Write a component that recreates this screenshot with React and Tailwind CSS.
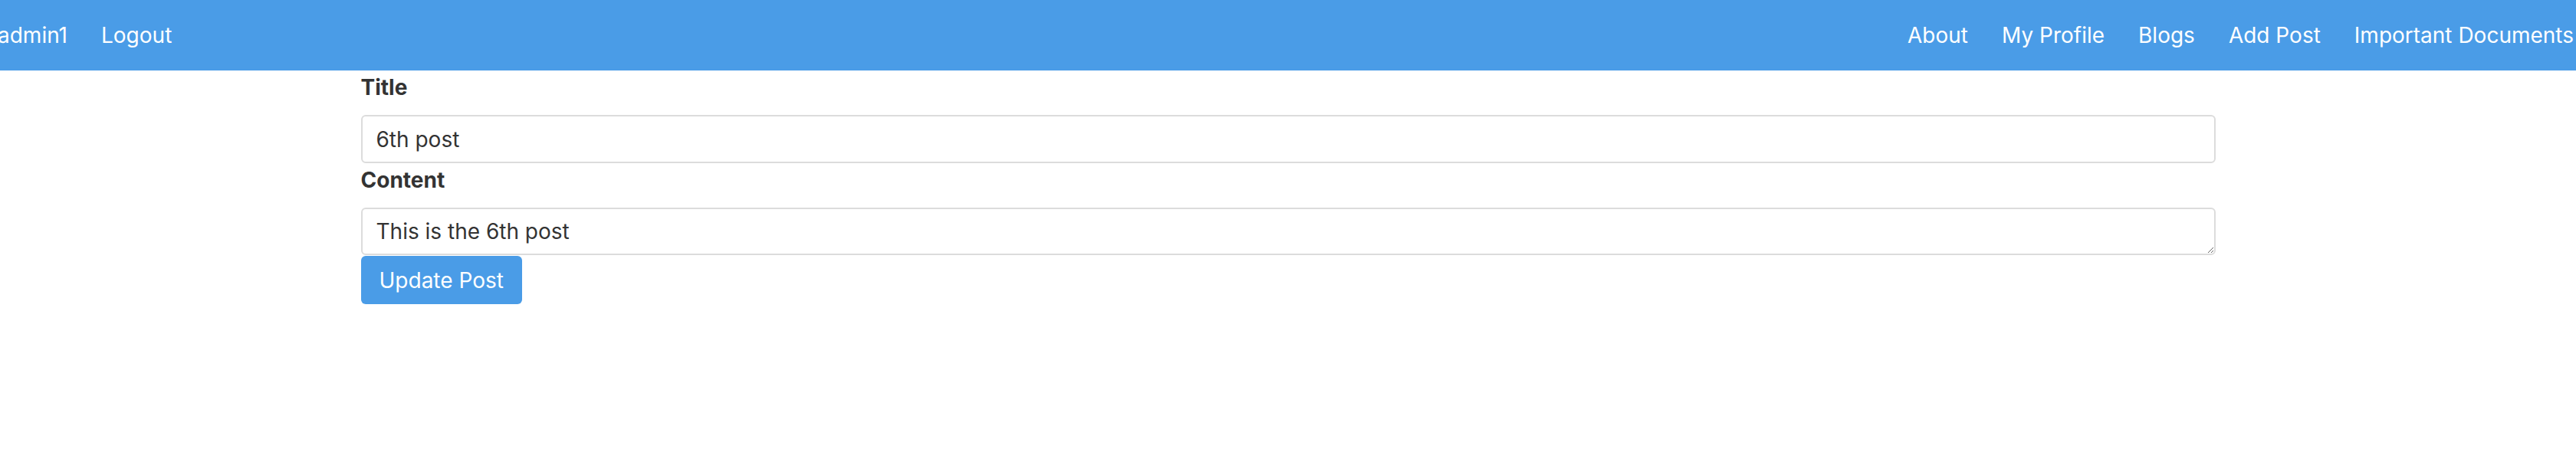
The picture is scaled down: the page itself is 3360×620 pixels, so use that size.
import React, { useState } from 'react';

const leftLinks = ['admin1', 'Logout'];
const rightLinks = ['About', 'My Profile', 'Blogs', 'Add Post', 'Important Documents'];

const NavLink = ({ label }) => (
    <li>
        <a href="#" className="block px-[22px] text-white">
            {label}
        </a>
    </li>
);

const App = () => {
    const [title, setTitle] = useState('6th post');
    const [content, setContent] = useState('This is the 6th post');

    return (
        <div className="min-h-screen bg-white font-['Inter','Liberation_Sans',sans-serif] text-[#333333]">
            {/* navbar */}
            <nav className="flex h-[92px] items-center justify-between overflow-hidden bg-[#4a9ce7] text-[28px] leading-[44px]">
                <ul className="ml-[-25px] flex">
                    {leftLinks.map((l) => (
                        <NavLink key={l} label={l} />
                    ))}
                </ul>
                <ul className="mr-[-19px] flex">
                    {rightLinks.map((l) => (
                        <NavLink key={l} label={l} />
                    ))}
                </ul>
            </nav>

            {/* edit form */}
            <form className="mx-auto flex w-[2419px] flex-col" onSubmit={(e) => e.preventDefault()}>
                <label className="mb-[14px] block text-[28px] font-bold leading-[44px]">Title</label>
                <input
                    type="text"
                    value={title}
                    onChange={(e) => setTitle(e.target.value)}
                    className="h-[63px] rounded-[6px] border-2 border-[#dcdcdc] px-[18px] text-[28px] text-[#333333] outline-none"
                />
                <label className="mb-[14px] block text-[28px] font-bold leading-[44px]">Content</label>
                <textarea
                    value={content}
                    onChange={(e) => setContent(e.target.value)}
                    className="h-[62px] rounded-[6px] border-2 border-[#dcdcdc] px-[18px] py-[12px] text-[28px] leading-[34px] text-[#333333] outline-none"
                />
                <div className="mt-px">
                    <button
                        type="submit"
                        className="h-[63px] rounded-[6px] bg-[#4a9ce7] px-[24px] text-[28px] text-white"
                    >
                        Update Post
                    </button>
                </div>
            </form>
        </div>
    );
};

export default App;
